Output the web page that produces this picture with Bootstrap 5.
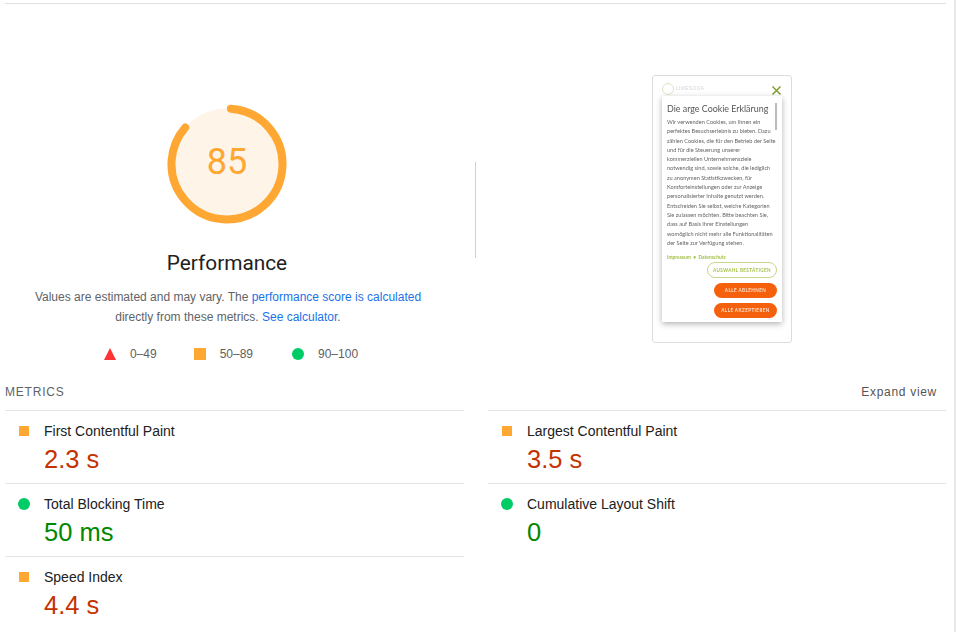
<!DOCTYPE html>
<html lang="en"><head><meta charset="utf-8"><title>Performance</title>
<link href="https://cdn.jsdelivr.net/npm/bootstrap@5.3.0/dist/css/bootstrap.min.css" rel="stylesheet">
<style>
html,body{height:632px;overflow:hidden;background:#fff}
body{font-family:"Liberation Sans",Arial,sans-serif;color:#212121}
.pg{width:956px;height:632px;border-right:2px solid #e8e8e8;padding:3px 8px 0 5px;overflow:hidden}
.topline{border-top:1px solid #e0e0e0}
.scorewrap{height:372px;padding-top:71px}
.leftcol{width:444px}
.gauge{width:120px;height:120px;margin-top:29px}
.gtext{font-size:36px;fill:#ffa733;font-family:Roboto,"Liberation Sans",sans-serif}
.ptitle{font-size:20.8px;line-height:26px;color:#212121;margin-top:26px;font-family:Roboto,"Liberation Sans",sans-serif}
.pdesc{font-size:12px;line-height:20px;color:#5f6368;margin-top:11px;padding-left:2px;letter-spacing:0}
.pdesc a{color:#1a73e8;text-decoration:none}
.legend{gap:37px;margin-top:19px;padding-left:8px;font-size:12px;color:#616161;line-height:16px}
.legend svg{display:block}
.legend .lgitem{gap:14px}
.legend .lglast{margin-left:2px}
.dividerv{width:1px;height:96px;background:#d0d0d0;margin:87px 0 0 26px}
.shotcol{margin-left:176px;width:140px}
.shot{width:140px;height:268px;border:1px solid #dcdcdc;border-radius:3px;padding:20px 9px 0 9px;position:relative;filter:blur(.35px)}
.brand{position:absolute;left:9px;top:7px;display:flex;align-items:center;gap:2px;font-size:5px;color:#d6d6d6;letter-spacing:.3px}
.brandmark{width:12px;height:12px;border:1px solid #dde5c4;border-radius:50%}
.closex{position:absolute;right:9px;top:9px;display:block}
.dlg{width:120px;height:226px;background:#fff;box-shadow:0 2px 6px rgba(0,0,0,.3);padding:7px 5px 0 5px;position:relative}
.dlg h6{font-size:8.9px;line-height:11px;font-weight:400;color:#555;margin:0 0 3px;white-space:nowrap;font-family:Lato,"Liberation Sans",sans-serif}
.dlg p{font-size:5.6px;line-height:9.3px;color:#666;margin:0;white-space:nowrap;font-family:Lato,"Liberation Sans",sans-serif}
.dscroll{position:absolute;right:5px;top:7px;width:2px;height:27px;background:#bbb}
.dlinks{font-size:4.9px;color:#a5c04a;margin-top:6px;line-height:8px;font-weight:700;font-family:Lato,"Liberation Sans",sans-serif;white-space:nowrap}
.dbtns{gap:5px;margin-top:1px}
.dbtn{display:flex;align-items:center;justify-content:center;height:15px;border-radius:8px;font-size:4.6px;font-weight:700;letter-spacing:.4px;white-space:nowrap;font-family:Lato,"Liberation Sans",sans-serif}
.dbtn1{width:70px;height:16px;border:1px solid #c5d88a;color:#a5c04a;background:#fff}
.dbtn2{width:63px;background:#f4600c;color:#fde0cc}
.mhead{height:34px;padding-bottom:2px;font-size:12px;letter-spacing:.8px;color:#5f6368}
.mexp{font-size:12px;letter-spacing:.7px;margin-right:9px;color:#555}
.mgrid{display:grid;grid-template-columns:459px 458px;column-gap:24px;align-content:start}
.mcell{border-top:1px solid #e4e4e4;height:73px;padding:12px 0 0 13px;display:flex;gap:14px}
.mcell svg{margin-top:2px;flex:none}
.mname{font-size:14px;line-height:16px;color:#212121}
.mval{font-size:25.5px;line-height:30px;margin-top:5px}
.vbad{color:#c33300}
.vgood{color:#008800}
</style></head>
<body>
<div class="pg">
<div class="topline"></div>
<div class="scorewrap d-flex align-items-start">
  <div class="leftcol text-center d-flex flex-column align-items-center">
    <svg class="gauge" viewBox="0 0 120 120" role="img" aria-label="85">
      <circle cx="60" cy="60" r="55.5" fill="#fef4e8" />
      <circle cx="60" cy="60" r="55.5" fill="none" stroke="#ffa733" stroke-width="8" stroke-linecap="round" stroke-dasharray="297 352" transform="rotate(-86 60 60)"/>
      <text x="60" y="70" text-anchor="middle" class="gtext">85</text>
    </svg>
    <div class="ptitle">Performance</div>
    <div class="pdesc">Values are estimated and may vary. The <a href="#">performance score is calculated</a><br>directly from these metrics. <a href="#">See calculator</a>.</div>
    <div class="legend d-flex align-items-center">
      <div class="lgitem d-flex align-items-center"><svg width="12" height="12" viewBox="0 0 12 12"><path d="M6 0 12 12H0z" fill="#ff3333"/></svg><span>0–49</span></div>
      <div class="lgitem d-flex align-items-center"><svg width="12" height="12" viewBox="0 0 12 12"><rect width="12" height="12" fill="#ffa733"/></svg><span>50–89</span></div>
      <div class="lgitem lglast d-flex align-items-center"><svg width="12" height="12" viewBox="0 0 12 12"><circle cx="6" cy="6" r="6" fill="#00cc66"/></svg><span>90–100</span></div>
    </div>
  </div>
  <div class="dividerv"></div>
  <div class="shotcol">
    <div class="shot">
      <div class="brand"><span class="brandmark"></span><span>LIMESODA</span></div>
      <svg class="closex" width="11" height="11" viewBox="0 0 11 11"><path d="M1.5 1.5 9.5 9.5M9.5 1.5 1.5 9.5" stroke="#7f9c2e" stroke-width="1.5"/></svg>
      <div class="dlg">
        <span class="dscroll"></span>
        <h6>Die arge Cookie Erklärung</h6>
        <p>Wir verwenden Cookies, um Ihnen ein<br>perfektes Besuchserlebnis zu bieten. Dazu<br>zählen Cookies, die für den Betrieb der Seite<br>und für die Steuerung unserer<br>kommerziellen Unternehmensziele<br>notwendig sind, sowie solche, die lediglich<br>zu anonymen Statistikzwecken, für<br>Komforteinstellungen oder zur Anzeige<br>personalisierter Inhalte genutzt werden.<br>Entscheiden Sie selbst, welche Kategorien<br>Sie zulassen möchten. Bitte beachten Sie,<br>dass auf Basis Ihrer Einstellungen<br>womöglich nicht mehr alle Funktionalitäten<br>der Seite zur Verfügung stehen.</p>
        <div class="dlinks">Impressum &nbsp;•&nbsp; Datenschutz</div>
        <div class="dbtns d-flex flex-column align-items-end">
          <div class="dbtn dbtn1">AUSWAHL BESTÄTIGEN</div>
          <div class="dbtn dbtn2">ALLE ABLEHNEN</div>
          <div class="dbtn dbtn2">ALLE AKZEPTIEREN</div>
        </div>
      </div>
    </div>
  </div>
</div>
<div class="mhead d-flex justify-content-between align-items-center"><span>METRICS</span><span class="mexp">Expand view</span></div>
<div class="mgrid">
  <div class="mcell"><svg width="12" height="12" viewBox="0 0 12 12"><rect x="1" y="1" width="10" height="10" fill="#ffa733"/></svg><div><div class="mname">First Contentful Paint</div><div class="mval vbad">2.3 s</div></div></div>
  <div class="mcell"><svg width="12" height="12" viewBox="0 0 12 12"><rect x="1" y="1" width="10" height="10" fill="#ffa733"/></svg><div><div class="mname">Largest Contentful Paint</div><div class="mval vbad">3.5 s</div></div></div>
  <div class="mcell"><svg width="12" height="12" viewBox="0 0 12 12"><circle cx="6" cy="6" r="6" fill="#00cc66"/></svg><div><div class="mname">Total Blocking Time</div><div class="mval vgood">50 ms</div></div></div>
  <div class="mcell"><svg width="12" height="12" viewBox="0 0 12 12"><circle cx="6" cy="6" r="6" fill="#00cc66"/></svg><div><div class="mname">Cumulative Layout Shift</div><div class="mval vgood">0</div></div></div>
  <div class="mcell"><svg width="12" height="12" viewBox="0 0 12 12"><rect x="1" y="1" width="10" height="10" fill="#ffa733"/></svg><div><div class="mname">Speed Index</div><div class="mval vbad">4.4 s</div></div></div>
</div>
</div>
<script src="https://cdn.jsdelivr.net/npm/bootstrap@5.3.0/dist/js/bootstrap.bundle.min.js"></script>
</body></html>
